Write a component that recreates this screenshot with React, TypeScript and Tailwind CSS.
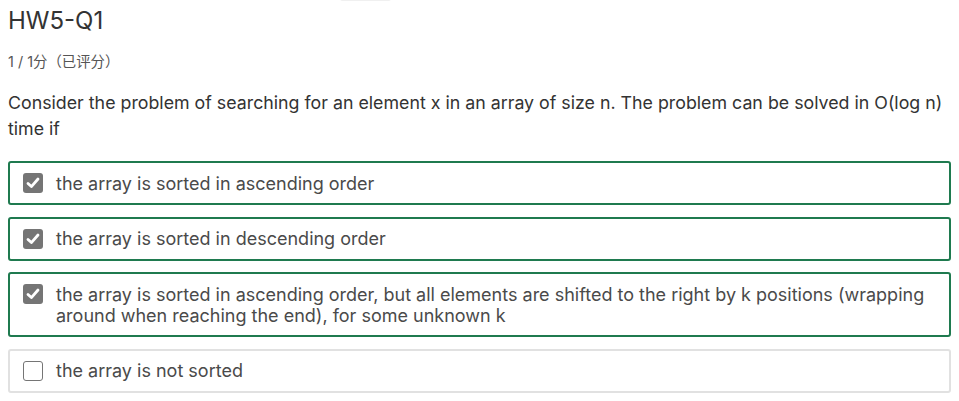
import React from 'react';

const options = [
  { text: 'the array is sorted in ascending order', checked: true },
  { text: 'the array is sorted in descending order', checked: true },
  {
    text: 'the array is sorted in ascending order, but all elements are shifted to the right by k positions (wrapping around when reaching the end), for some unknown k',
    checked: true,
  },
  { text: 'the array is not sorted', checked: false },
];

const CheckBox: React.FC<{ checked: boolean }> = ({ checked }) =>
  checked ? (
    <span className="flex h-5 w-5 shrink-0 items-center justify-center rounded-[3px] bg-[#757575]">
      <svg width="16" height="16" viewBox="0 0 16 16" fill="none">
        <path d="M3 8.4 L6.4 11.6 L13 4" stroke="#fff" strokeWidth="2.8" strokeLinecap="round" strokeLinejoin="round" />
      </svg>
    </span>
  ) : (
    <span className="block h-5 w-5 shrink-0 rounded-[3px] border border-[#757575] bg-white" />
  );

export default function App() {
  return (
    <div className="relative min-h-[401px] bg-white px-[8px] text-[#333]" style={{ fontFamily: 'Inter, "Noto Sans CJK SC", sans-serif' }}>
      <div className="absolute left-[340px] top-[-4px] h-[5px] w-[51px] rounded-full bg-[#f0f0f0]" />

      <h1 className="pt-[5px] text-[24px] leading-[32px] font-normal text-[#333]">HW5-Q1</h1>
      <p className="mt-[15px] text-[14.4px] leading-[20px] text-[#555]">1 / 1分（已评分）</p>

      <p className="mt-[18px] text-[17.8px] leading-[26px] text-[#333]">
        Consider the problem of searching for an element x in an array of size n. The problem can be solved in O(log n) time if
      </p>

      <div className="mt-[19px] flex flex-col gap-[11.5px]">
        {options.map((o, i) => (
          <div
            key={i}
            className={
              'flex items-start gap-[13px] rounded-[3px] border-2 px-[13px] py-[9.5px] ' +
              (o.checked ? 'border-[#1f7a4f]' : 'border-[#e1e1e1]')
            }
          >
            <span className="block shrink-0 pt-[0.5px]">
              <CheckBox checked={o.checked} />
            </span>
            <span className="pr-[8px] text-[18px] leading-[21px] text-[#4a4a4a]">{o.text}</span>
          </div>
        ))}
      </div>
    </div>
  );
}
